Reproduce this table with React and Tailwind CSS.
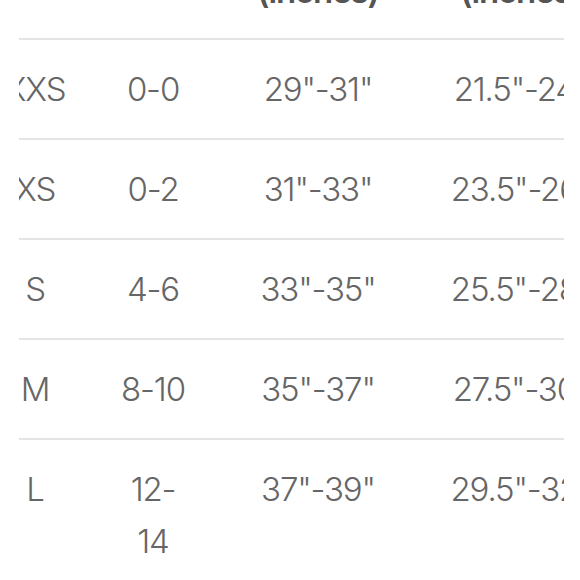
const rows = [
  { size: "XXS", us: "0-0", bust: '29"-31"', waist: '21.5"-24"' },
  { size: "XS", us: "0-2", bust: '31"-33"', waist: '23.5"-26"' },
  { size: "S", us: "4-6", bust: '33"-35"', waist: '25.5"-28"' },
  { size: "M", us: "8-10", bust: '35"-37"', waist: '27.5"-30"' },
  { size: "L", us: "12-14", bust: '37"-39"', waist: '29.5"-32"' },
];

function Row({ cells, head }) {
  return (
    <div
      className={`grid grid-cols-[70px_166px_164px_242px] border-b-2 border-[#e4e4e4] ${
        head
          ? "pt-[25px] pb-[21px] font-semibold text-[#555] whitespace-pre-line"
          : "pt-[23px] pb-[23px]"
      }`}
    >
      <div className="text-center">{cells[0]}</div>
      <div className="flex justify-center">
        <div className="w-[74px] text-center">{cells[1]}</div>
      </div>
      <div className="text-center">{cells[2]}</div>
      <div className="text-center">{cells[3]}</div>
    </div>
  );
}

export default function App() {
  return (
    <div
      className="w-[580px] h-[580px] bg-white overflow-hidden"
      style={{ fontFamily: "Inter, 'Noto Sans', sans-serif" }}
    >
      <div className="ml-[19px] w-[545px] overflow-hidden">
        <div className="-ml-[19px] w-[642px] -mt-[112px] text-[33px] leading-[52px] font-light tracking-[-0.035em] text-[#666]">
          <Row head cells={["Size", "US", "Bust\n(inches)", "Waist\n(inches)"]} />
          {rows.map((r) => (
            <Row key={r.size} cells={[r.size, r.us, r.bust, r.waist]} />
          ))}
        </div>
      </div>
    </div>
  );
}
